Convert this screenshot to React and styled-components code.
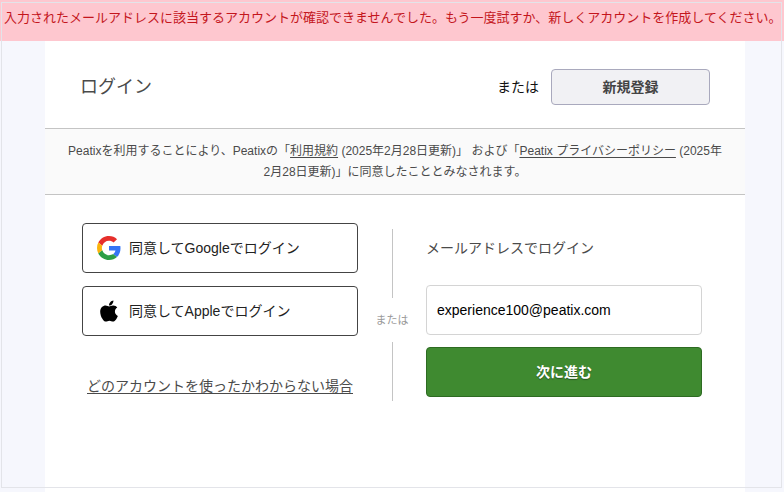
import { useState } from 'react'
import styled, { createGlobalStyle } from 'styled-components'
import { FaApple } from 'react-icons/fa'

const GlobalStyle = createGlobalStyle`
  * {
    box-sizing: border-box;
  }
  body {
    margin: 0;
    background: #f6f7fd;
    color: #4a4a4a;
    font-family: 'Liberation Sans', 'Noto Sans CJK JP', sans-serif;
    font-size: 14px;
    line-height: 20px;
  }
  button,
  input {
    font: inherit;
  }
`

const Page = styled.div`
  min-height: 100vh;
  display: flex;
  flex-direction: column;
`

const Frame = styled.div`
  position: fixed;
  inset: 2px 2px 4px 1px;
  border: 1px solid #e3e4e9;
  pointer-events: none;
`

const Alert = styled.p`
  margin: 0;
  padding: 8px 0 13px 4px;
  background: #fec7cf;
  color: #c4161c;
  font-size: 13px;
`

const Main = styled.main`
  flex: 1;
  display: flex;
  justify-content: center;
  padding-left: 6px;
`

const Card = styled.div`
  width: 100%;
  max-width: 700px;
  background: #fff;
`

const Header = styled.header`
  display: flex;
  align-items: center;
  justify-content: space-between;
  padding: 28px 35px 23px;
`

const Title = styled.h1`
  margin: 0;
  font-size: 18px;
  font-weight: 400;
`

const SignUp = styled.div`
  display: flex;
  align-items: center;
  gap: 12px;
  color: #111;
`

const SignUpButton = styled.button`
  width: 159px;
  height: 36px;
  border: 1px solid #a9a9bd;
  border-radius: 4px;
  background: #f1f1f4;
  color: #444;
  font-weight: 700;
`

const Terms = styled.p`
  margin: 0;
  padding: 12px 20px 11px;
  border-top: 1px solid #c4c4c4;
  border-bottom: 1px solid #c4c4c4;
  background: #fafafa;
  font-size: 12px;
  line-height: 21px;
  text-align: center;
`

const Link = styled.a`
  color: inherit;
  text-underline-offset: 2px;
`

const Columns = styled.div`
  display: grid;
  grid-template-columns: 1fr 68px 1fr;
  padding: 28px 43px 90px 37px;
`

const Social = styled.div`
  display: flex;
  flex-direction: column;
  gap: 13px;
`

const SocialButton = styled.button`
  display: flex;
  align-items: center;
  gap: 8px;
  height: 50px;
  padding: 0 14px;
  border: 1px solid #444;
  border-radius: 4px;
  background: #fff;
  color: #222;
`

const IconBox = styled.span`
  display: flex;
  align-items: center;
  justify-content: center;
  width: 24px;
  height: 24px;
  color: #000;
`

const HelpLink = styled(Link)`
  margin-top: 27px;
  text-align: center;
`

const Divider = styled.div`
  display: flex;
  flex-direction: column;
  align-items: center;
  padding-top: 6px;
  gap: 12px;
  color: #999;
  font-size: 11px;

  &::before,
  &::after {
    content: '';
    height: 69px;
    border-left: 1px solid #c4c4c4;
  }
  &::after {
    height: 59px;
  }
`

const Form = styled.form`
  display: flex;
  flex-direction: column;
  gap: 12px;
`

const Label = styled.label`
  padding: 15px 0;
`

const Input = styled.input`
  width: 100%;
  height: 50px;
  padding: 0 10px;
  border: 1px solid #d4d4d4;
  border-radius: 4px;
  background: #fff;
  color: #000;
`

const Submit = styled.button`
  height: 50px;
  border: 1px solid #2d6b22;
  border-radius: 4px;
  background: #3f8a30;
  color: #fff;
  font-weight: 700;
  text-shadow: 0 1px 1px rgba(0, 0, 0, 0.4);
`

const GoogleLogo = () => (
  <svg width='24' height='24' viewBox='0 0 48 48' aria-hidden='true'>
    <path
      fill='#e62f2b'
      d='M24 9.5c3.54 0 6.71 1.22 9.21 3.6l6.85-6.85C35.9 2.38 30.47 0 24 0 14.62 0 6.51 5.38 2.56 13.22l7.98 6.19C12.43 13.72 17.74 9.5 24 9.5z'
    />
    <path
      fill='#3575f5'
      d='M46.98 24.55c0-1.57-.15-3.09-.38-4.55H24v9.02h12.94c-.58 2.96-2.26 5.48-4.78 7.18l7.73 6c4.51-4.18 7.09-10.36 7.09-17.65z'
    />
    <path
      fill='#fbb30b'
      d='M10.53 28.59c-.48-1.45-.76-2.99-.76-4.59s.27-3.14.76-4.59l-7.98-6.19C.92 16.46 0 20.12 0 24c0 3.88.92 7.54 2.56 10.78l7.97-6.19z'
    />
    <path
      fill='#2c9e46'
      d='M24 48c6.48 0 11.93-2.13 15.89-5.81l-7.73-6c-2.15 1.45-4.92 2.3-8.16 2.3-6.26 0-11.57-4.22-13.47-9.91l-7.98 6.19C6.51 42.62 14.62 48 24 48z'
    />
  </svg>
)

export default function App() {
  const [email, setEmail] = useState('experience100@peatix.com')

  return (
    <>
      <GlobalStyle />
      <Page lang='ja'>
        <Alert role='alert'>
          入力されたメールアドレスに該当するアカウントが確認できませんでした。もう一度試すか、新しくアカウントを作成してください。
        </Alert>
        <Main>
          <Card>
            <Header>
              <Title>ログイン</Title>
              <SignUp>
                <span>または</span>
                <SignUpButton type='button'>新規登録</SignUpButton>
              </SignUp>
            </Header>
            <Terms>
              Peatixを利用することにより、Peatixの「<Link href='#terms'>利用規約</Link>{' '}
              (2025年2月28日更新)」 および「
              <Link href='#privacy'>Peatix プライバシーポリシー</Link> (2025年2月28日更新)」に同意したこととみなされます。
            </Terms>
            <Columns>
              <Social>
                <SocialButton type='button'>
                  <IconBox>
                    <GoogleLogo />
                  </IconBox>
                  同意してGoogleでログイン
                </SocialButton>
                <SocialButton type='button'>
                  <IconBox>
                    <FaApple size={24} />
                  </IconBox>
                  同意してAppleでログイン
                </SocialButton>
                <HelpLink href='#help'>どのアカウントを使ったかわからない場合</HelpLink>
              </Social>
              <Divider>または</Divider>
              <Form onSubmit={(e) => e.preventDefault()}>
                <Label htmlFor='email'>メールアドレスでログイン</Label>
                <Input
                  id='email'
                  type='email'
                  value={email}
                  onChange={(e) => setEmail(e.target.value)}
                />
                <Submit type='submit'>次に進む</Submit>
              </Form>
            </Columns>
          </Card>
        </Main>
      </Page>
      <Frame />
    </>
  )
}
